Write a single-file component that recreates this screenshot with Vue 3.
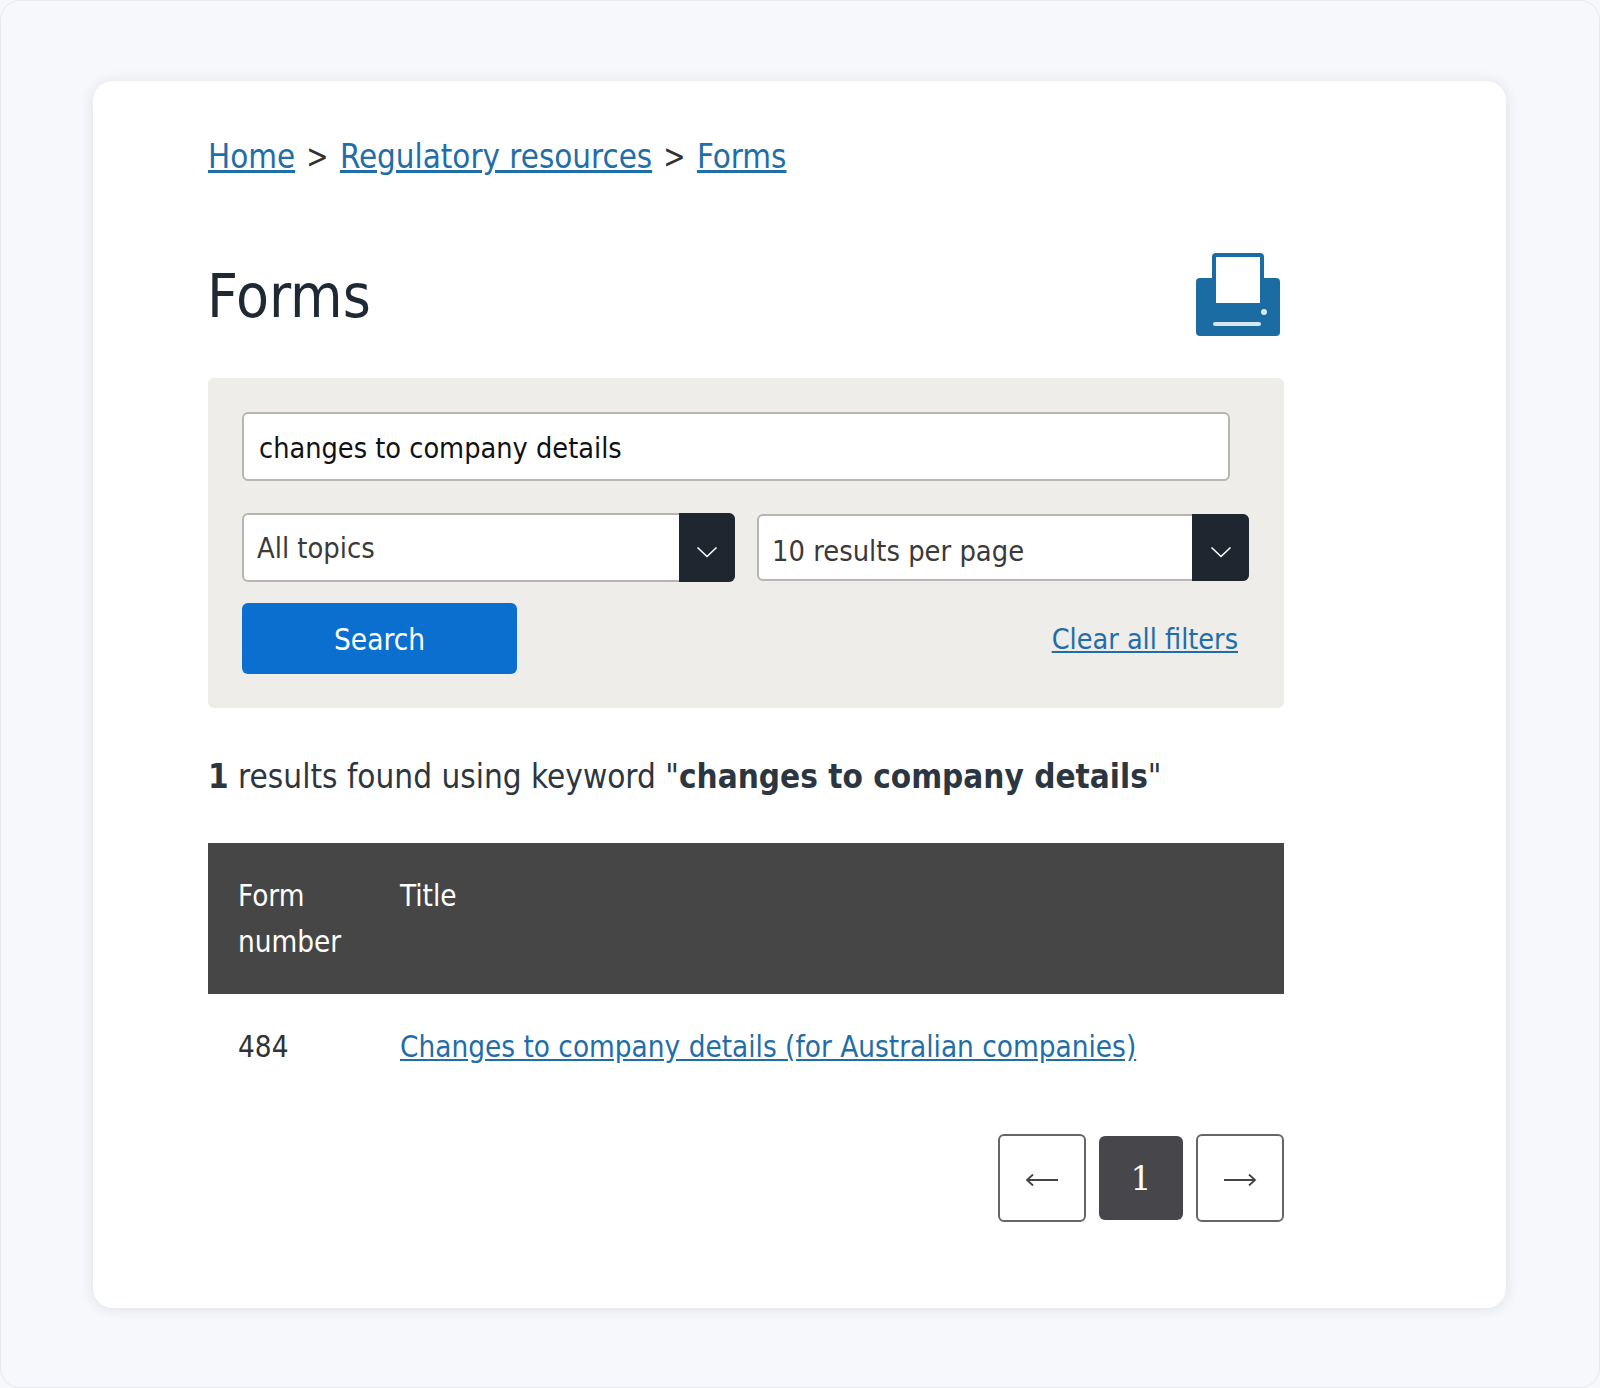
<template>
    <div class="page">
        <div class="card">
            <nav class="breadcrumb">
                <a href="#">Home</a>
                <span class="sep">&gt;</span>
                <a href="#">Regulatory resources</a>
                <span class="sep">&gt;</span>
                <a href="#">Forms</a>
            </nav>

            <div class="title-row">
                <h1>Forms</h1>
                <svg class="printer" width="84" height="84" viewBox="0 0 84 84">
                    <path d="M4 26h76a4 4 0 0 1 4 4v50a4 4 0 0 1-4 4H4a4 4 0 0 1-4-4V30a4 4 0 0 1 4-4z" fill="#1a6ca3" />
                    <rect x="18" y="3" width="48" height="50" rx="2" fill="#fff" stroke="#1a6ca3" stroke-width="4" />
                    <circle cx="68" cy="60" r="3" fill="#d6e8f4" />
                    <rect x="17" y="70" width="48" height="4" rx="2" fill="#d6e8f4" />
                </svg>
            </div>

            <div class="filters">
                <input class="keyword" type="text" value="changes to company details" />
                <div class="select-row">
                    <div class="select" v-for="opt in selects" :key="opt">
                        <span class="select-text">{{ opt }}</span>
                        <span class="select-arrow">
                            <svg width="22" height="12" viewBox="0 0 22 12" fill="none">
                                <path d="M1.5 1.5L11 10.5L20.5 1.5" stroke="#fff" stroke-width="1.6" />
                            </svg>
                        </span>
                    </div>
                </div>
                <div class="action-row">
                    <button class="search-btn">Search</button>
                    <a href="#" class="clear">Clear all filters</a>
                </div>
            </div>

            <p class="summary"><b>1</b> results found using keyword "<b>changes to company details</b>"</p>

            <table class="results">
                <thead>
                    <tr>
                        <th class="col-number">Form number</th>
                        <th>Title</th>
                    </tr>
                </thead>
                <tbody>
                    <tr v-for="row in rows" :key="row.number">
                        <td>{{ row.number }}</td>
                        <td><a href="#">{{ row.title }}</a></td>
                    </tr>
                </tbody>
            </table>

            <div class="pager">
                <button class="page-btn">
                    <svg width="34" height="14" viewBox="0 0 34 14" fill="none">
                        <path d="M33 7H2M8 1.5L2 7l6 5.5" stroke="#444" stroke-width="1.8" />
                    </svg>
                </button>
                <button class="page-btn current">1</button>
                <button class="page-btn">
                    <svg width="34" height="14" viewBox="0 0 34 14" fill="none">
                        <path d="M1 7h31M26 1.5L32 7l-6 5.5" stroke="#444" stroke-width="1.8" />
                    </svg>
                </button>
            </div>
        </div>
    </div>
</template>

<script setup>
const selects = ['All topics', '10 results per page'];

const rows = [
    { number: '484', title: 'Changes to company details (for Australian companies)' }
];
</script>

<style>
body {
    background: #f6f8fb;
}
</style>

<style scoped>
.page {
    box-sizing: border-box;
    height: 1388px;
    padding: 80px 93px 80px 92px;
    background: #f6f8fb;
    border: 1px solid #e6e8ed;
    border-radius: 20px;
    font-family: "DejaVu Sans Condensed", "DejaVu Sans", sans-serif;
    font-stretch: condensed;
    color: #222;
}

.card {
    box-sizing: border-box;
    height: 1227px;
    padding: 54px 222px 0 115px;
    background: #fff;
    border-radius: 20px;
    box-shadow: 0 1px 14px rgba(40, 50, 70, 0.12);
}

a {
    color: #1f6ea8;
    text-decoration: underline;
}

.breadcrumb {
    display: flex;
    gap: 10px;
    font-size: 32.8px;
    line-height: 44px;
}

.sep {
    color: #333;
    transform: scaleX(0.9);
}

.title-row {
    display: flex;
    justify-content: space-between;
    align-items: center;
    margin-top: 73px;
    padding-right: 4px;
    height: 84px;
}

h1 {
    margin: 4px 0 0 -1px;
    font-size: 60px;
    font-weight: 400;
    color: #1f2933;
}

.printer {
    display: block;
}

.filters {
    margin-top: 42px;
    padding: 34px 35px 34px 34px;
    background: #eeede9;
    border-radius: 6px;
}

.keyword {
    box-sizing: border-box;
    display: block;
    width: 988px;
    height: 69px;
    padding: 2px 15px 0;
    background: #fff;
    border: 2px solid #b5b5b2;
    border-radius: 6px;
    font: inherit;
    font-size: 28.6px;
    color: #111;
    outline: none;
}

.select-row {
    display: flex;
    align-items: center;
    gap: 22px;
    margin-top: 32px;
}

.select {
    box-sizing: border-box;
    display: flex;
    align-items: center;
    justify-content: space-between;
    flex: 0 0 493px;
    height: 69px;
    padding-left: 13px;
    background: #fff;
    border: 2px solid #b5b5b2;
    border-radius: 6px;
    font-size: 28.8px;
    color: #3a3a3a;
}

.select:last-child {
    flex-basis: 492px;
    height: 67px;
}

.select:last-child .select-text {
    padding-top: 7px;
}

.select-arrow {
    display: flex;
    align-items: center;
    justify-content: center;
    width: 56px;
    height: 69px;
    padding-top: 9px;
    box-sizing: border-box;
    margin-right: -2px;
    background: #1e2730;
    border-radius: 0 6px 6px 0;
}

.select:last-child .select-arrow {
    width: 57px;
    height: 67px;
}

.action-row {
    display: flex;
    align-items: center;
    justify-content: space-between;
    margin-top: 21px;
    padding-right: 11px;
}

.search-btn {
    width: 275px;
    height: 71px;
    padding: 2px 0 0;
    background: #0a6fcf;
    border: none;
    border-radius: 6px;
    font: inherit;
    font-size: 29.5px;
    color: #fff;
}

.clear {
    margin-top: 2px;
    font-size: 28.5px;
}

.summary {
    margin: 45px 0 0;
    font-size: 33px;
    line-height: 48px;
    color: #2c3640;
}

.summary b {
    font-weight: 700;
}

.results {
    width: 100%;
    margin-top: 42px;
    border-collapse: collapse;
    font-size: 29.4px;
}

th {
    height: 151px;
    padding: 30px 30px 29px;
    box-sizing: border-box;
    background: #464646;
    color: #fff;
    font-weight: 400;
    text-align: left;
    vertical-align: top;
    line-height: 46px;
}

.col-number {
    width: 192px;
    max-width: 192px;
}

th:first-child,
td:first-child {
    padding-right: 20px;
}

th:last-child,
td:last-child {
    padding-left: 0;
}

td {
    padding: 32px 30px;
    line-height: 42px;
    color: #333;
}

.pager {
    display: flex;
    justify-content: flex-end;
    align-items: center;
    gap: 13px;
    margin-top: 34px;
}

.page-btn {
    display: flex;
    align-items: center;
    justify-content: center;
    width: 88px;
    height: 88px;
    padding: 0;
    background: #fff;
    border: 2px solid #666;
    border-radius: 6px;
}

.page-btn svg {
    margin-top: 3px;
}

.page-btn.current {
    width: 84px;
    height: 84px;
    background: #47474b;
    border: none;
    font-family: "DejaVu Serif", serif;
    font-size: 33px;
    color: #fff;
}
</style>
